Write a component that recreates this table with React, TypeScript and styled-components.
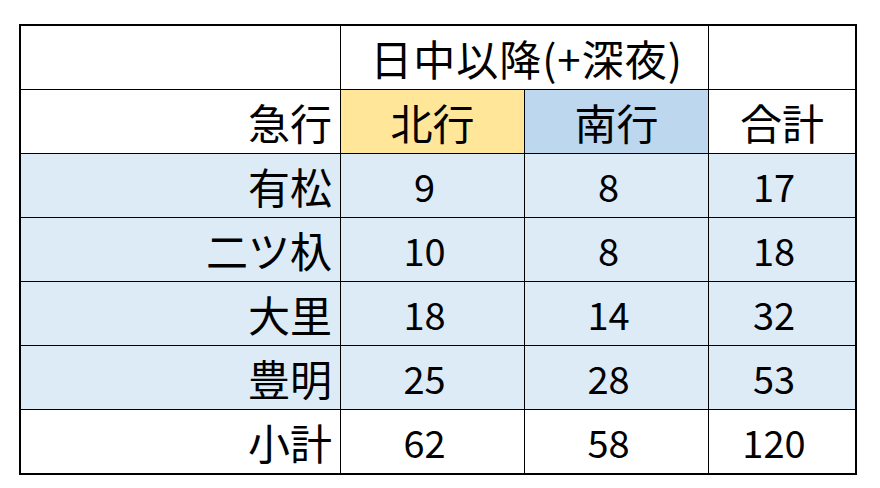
import { Fragment } from 'react';
import styled, { createGlobalStyle } from 'styled-components';

const GlobalStyle = createGlobalStyle`
  html, body {
    margin: 0;
    padding: 0;
    background: #fff;
  }
  body {
    font-family: "Noto Sans CJK JP", "Noto Sans", sans-serif;
    color: #000;
  }
`;

const Page = styled.div`
  padding: 24px 0 0 19px;
`;

const Table = styled.div`
  display: grid;
  grid-template-columns: 319px 183px 183px 146px;
  grid-auto-rows: 63px;
  gap: 1px;
  width: max-content;
  border: 2px solid #000;
  background: #000;
`;

type Tone = 'white' | 'yellow' | 'blue' | 'light';

const tones: Record<Tone, string> = {
  white: '#ffffff',
  yellow: '#ffe699',
  blue: '#bdd7ee',
  light: '#ddebf7',
};

const Cell = styled.div<{ $tone?: Tone; $right?: boolean; $span?: number }>`
  display: flex;
  align-items: center;
  justify-content: ${(p) => (p.$right ? 'flex-end' : 'center')};
  padding: 0 ${(p) => (p.$right ? '8px' : '0')} 0 0;
  grid-column: ${(p) => (p.$span ? `span ${p.$span}` : 'auto')};
  background: ${(p) => tones[p.$tone ?? 'white']};
  font-size: 42px;
  line-height: 1;
  white-space: nowrap;
`;

const Title = styled(Cell)`
  padding-left: 4px;
  letter-spacing: 1px;
`;

// numbers sit a little left of centre, like the sheet they come from
const NumCell = styled(Cell)`
  padding: 0 16px 0 0;
  font-size: 38px;
`;

const rows = [
  { name: '有松', north: 9, south: 8, total: 17 },
  { name: '二ツ杁', north: 10, south: 8, total: 18 },
  { name: '大里', north: 18, south: 14, total: 32 },
  { name: '豊明', north: 25, south: 28, total: 53 },
];

export default function App() {
  return (
    <Page>
      <GlobalStyle />
      <Table>
        <Cell />
        <Title $span={2}>日中以降(+深夜)</Title>
        <Cell />

        <Cell $right>急行</Cell>
        <Cell $tone="yellow">北行</Cell>
        <Cell $tone="blue">南行</Cell>
        <Cell>合計</Cell>

        {rows.map((r) => (
          <Fragment key={r.name}>
            <Cell $tone="light" $right>{r.name}</Cell>
            <NumCell $tone="light">{r.north}</NumCell>
            <NumCell $tone="light">{r.south}</NumCell>
            <NumCell $tone="light">{r.total}</NumCell>
          </Fragment>
        ))}

        <Cell $right>小計</Cell>
        <NumCell>62</NumCell>
        <NumCell>58</NumCell>
        <NumCell>120</NumCell>
      </Table>
    </Page>
  );
}
